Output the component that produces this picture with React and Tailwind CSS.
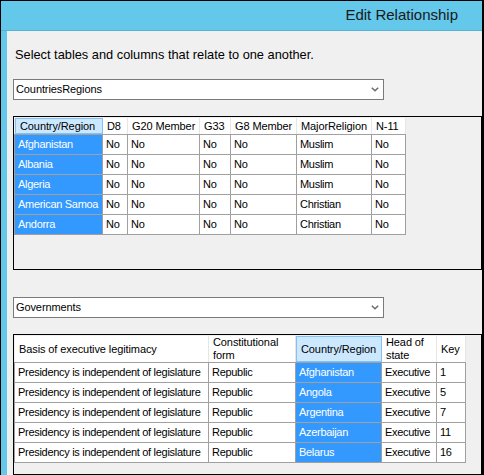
import { Fragment } from 'react'

const t1Cols = [
  { name: 'Country/Region', w: 'w-[88px]', sel: true },
  { name: 'D8', w: 'w-[25px]' },
  { name: 'G20 Member', w: 'w-[72px]' },
  { name: 'G33', w: 'w-[31px]' },
  { name: 'G8 Member', w: 'w-[66px]' },
  { name: 'MajorReligion', w: 'w-[75px]' },
  { name: 'N-11', w: 'w-[34px]' },
]

const t1Rows = [
  ['Afghanistan', 'No', 'No', 'No', 'No', 'Muslim', 'No'],
  ['Albania', 'No', 'No', 'No', 'No', 'Muslim', 'No'],
  ['Algeria', 'No', 'No', 'No', 'No', 'Muslim', 'No'],
  ['American Samoa', 'No', 'No', 'No', 'No', 'Christian', 'No'],
  ['Andorra', 'No', 'No', 'No', 'No', 'Christian', 'No'],
]

const t2Cols = [
  { name: ['Basis of executive legitimacy'], w: 'w-[194px]' },
  { name: ['Constitutional', 'form'], w: 'w-[87px]' },
  { name: ['Country/Region'], w: 'w-[86px]', sel: true },
  { name: ['Head of', 'state'], w: 'w-[55px]' },
  { name: ['Key'], w: 'w-[29px]' },
]

const t2Rows = [
  ['Afghanistan', '1'],
  ['Angola', '5'],
  ['Argentina', '7'],
  ['Azerbaijan', '11'],
  ['Belarus', '16'],
].map(([c, k]) => ['Presidency is independent of legislature', 'Republic', c, 'Executive', k])

function Combo({ value }) {
  return (
    <div className="ml-[6px] flex h-[21px] w-[371px] items-center justify-between border border-[#7a7a7a] bg-white pl-[2px] pr-[4px] text-[11px] tracking-[-0.1px] text-black">
      <span>{value}</span>
      <svg width="8" height="5" viewBox="0 0 8 5">
        <path d="M0.8 0.8 L4 3.8 L7.2 0.8" fill="none" stroke="#6b6b6b" strokeWidth="1.5" />
      </svg>
    </div>
  )
}

function Cell({ w, sel, children }) {
  return (
    <div
      className={`${w} flex shrink-0 items-center overflow-hidden whitespace-nowrap border-r border-[#a0a0a0] pl-[3px] ${
        sel ? 'bg-[#3399ff] text-white' : 'bg-white text-black'
      }`}
    >
      {children}
    </div>
  )
}

function Grid({ cols, rows, headerH }) {
  return (
    <div className="flex flex-col pt-[1px]">
      <div className={`flex ${headerH} pl-[1px] text-[11px] tracking-[-0.1px]`}>
        {cols.map((c, i) => (
          <div
            key={i}
            className={`${c.w} flex shrink-0 flex-col justify-center pl-[4px] leading-[13px] ${
              c.sel ? 'border border-[#84c1f2] bg-[#cce8ff]' : 'border-r border-[#e6e6e6] bg-white'
            }`}
          >
            {[].concat(c.name).map((n, j) => (
              <span key={j} className="whitespace-nowrap">{n}</span>
            ))}
          </div>
        ))}
      </div>
      <div className="flex flex-col self-start border-l border-t border-[#a0a0a0] text-[11px] tracking-[-0.3px]">
        {rows.map((r, i) => (
          <div key={i} className="flex h-[20px] border-b border-[#a0a0a0]">
            {r.map((v, j) => (
              <Cell key={j} w={cols[j].w} sel={cols[j].sel}>{v}</Cell>
            ))}
          </div>
        ))}
      </div>
    </div>
  )
}

export default function App() {
  return (
    <div className="flex h-[475px] w-[484px] flex-col border-l border-r-2 border-t border-black font-['Liberation_Sans',Arial,sans-serif] text-black">
      <div className="flex h-[30px] shrink-0 items-center justify-end border-b border-[#56b3d6] bg-[#63c8ea] pr-[24px] text-[15px] text-[#1a1a1a]">
        Edit Relationship
      </div>
      <div className="flex flex-1">
        <div className="w-[6px] shrink-0 bg-[#63c8ea]" />
        <div className="flex flex-1 flex-col bg-[#f0f0f0]">
          <div className="ml-[8px] mt-[16px] h-[15px] text-[12.8px] leading-[15px]">
            Select tables and columns that relate to one another.
          </div>
          <div className="mt-[17px]">
            <Combo value="CountriesRegions" />
          </div>
          <div className="ml-[6px] mt-[16px] h-[154px] border border-black">
            <Grid cols={t1Cols} rows={t1Rows} headerH="h-[16px]" />
          </div>
          <div className="mt-[27px]">
            <Combo value="Governments" />
          </div>
          <div className="ml-[6px] mt-[16px] h-[141px] border border-black">
            <Grid cols={t2Cols} rows={t2Rows} headerH="h-[26px]" />
          </div>
        </div>
      </div>
    </div>
  )
}
